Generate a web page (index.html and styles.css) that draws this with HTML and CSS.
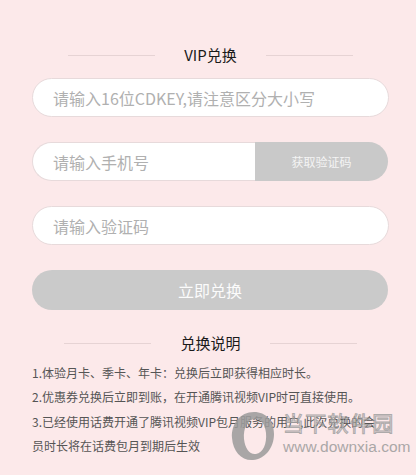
FILE: index.html
```html
<!DOCTYPE html>
<html lang="zh-CN">
<head>
<meta charset="utf-8">
<title>VIP兑换</title>
<link rel="stylesheet" href="styles.css">
</head>
<body>
<div class="page">
  <div class="heading first"><span class="rule"></span><span class="heading-text">VIP兑换</span><span class="rule"></span></div>

  <div class="field"><span class="ph">请输入16位CDKEY,请注意区分大小写</span></div>

  <div class="field-group">
    <div class="field left"><span class="ph">请输入手机号</span></div>
    <div class="code-btn">获取验证码</div>
  </div>

  <div class="field"><span class="ph">请输入验证码</span></div>

  <div class="submit">立即兑换</div>

  <div class="heading second"><span class="rule"></span><span class="heading-text">兑换说明</span><span class="rule"></span></div>

  <div class="notes">
    <p>1.体验月卡、季卡、年卡：兑换后立即获得相应时长。</p>
    <p>2.优惠券兑换后立即到账，在开通腾讯视频VIP时可直接使用。</p>
    <p>3.已经使用话费开通了腾讯视频VIP包月服务的用户,此次兑换的会员时长将在话费包月到期后生效</p>
  </div>
</div>

<div class="watermark">
  <svg class="wm-logo" width="46" height="52" viewBox="0 0 46 52">
    <path fill-rule="evenodd" fill="#9b9b9b" d="M24 2 C10 2 1 14 2 28 C3 42 12 51 23 50 C35 49 44 38 44 24 C44 11 36 2 24 2 Z M25 9 C18 9 13 18 14 29 C15 39 20 45 26 44 C33 43 37 34 36 23 C35 14 31 9 25 9 Z"/>
  </svg>
  <div class="wm-texts">
    <div class="wm-cn">当下软件园</div>
    <div class="wm-url">www.downxia.com</div>
  </div>
</div>
</body>
</html>
```

FILE: styles.css
```css
html, body {
  margin: 0;
  padding: 0;
}
body {
  background: #fce9ea;
  width: 416px;
  height: 475px;
  overflow: hidden;
  position: relative;
  font-family: "Noto Sans CJK SC", "Noto Sans", "Liberation Sans", sans-serif;
}
.page {
  margin-left: 32px;
  width: 357px;
  padding-top: 45px;
  display: flex;
  flex-direction: column;
}
.heading {
  display: flex;
  justify-content: center;
  align-items: center;
  gap: 29px;
  height: 20px;
}
.heading .rule {
  width: 87px;
  height: 1px;
  background: #e6d3d4;
}
.heading-text {
  font-size: 15px;
  line-height: 20px;
  color: #1a1a1a;
}
.heading.first {
  margin-bottom: 13px;
}
.heading.second {
  margin-top: 23px;
  margin-bottom: 8px;
}
.field {
  box-sizing: border-box;
  height: 39px;
  border: 1px solid #e7dadb;
  border-radius: 20px;
  background: #fff;
  display: flex;
  align-items: center;
  padding-left: 20px;
}
.ph {
  font-size: 16px;
  color: #b0b0b0;
  white-space: nowrap;
}
.field-group {
  display: flex;
  height: 39px;
  margin: 25px 0;
}
.field.left {
  flex: 1;
  border-right: none;
  border-radius: 20px 0 0 20px;
}
.code-btn {
  width: 133px;
  margin-right: 1px;
  height: 39px;
  background: #c9c9c9;
  border-radius: 0 20px 20px 0;
  color: #f4f4f4;
  font-size: 12px;
  display: flex;
  align-items: center;
  justify-content: center;
}
.submit {
  margin-top: 25px;
  margin-right: 1px;
  height: 40px;
  border-radius: 20px;
  background: #cacaca;
  color: #fbfbfb;
  font-size: 16px;
  display: flex;
  align-items: center;
  justify-content: center;
}
.notes {
  font-size: 12px;
  line-height: 24.3px;
  color: #555;
  padding-right: 6px;
}
.notes p {
  margin: 0;
}
.watermark {
  position: absolute;
  left: 230px;
  top: 408px;
  display: flex;
  align-items: flex-start;
  gap: 7px;
  opacity: 0.85;
  pointer-events: none;
}
.wm-logo {
  margin-top: 2px;
}
.wm-texts {
  display: flex;
  flex-direction: column;
  white-space: nowrap;
}
.wm-cn {
  font-size: 21px;
  line-height: 29px;
  color: rgba(160, 160, 160, 0.25);
  -webkit-text-stroke: 1px #a0a0a0;
  letter-spacing: 1.3px;
}
.wm-url {
  font-family: "Liberation Sans", sans-serif;
  font-size: 15.5px;
  line-height: 17px;
  color: #9c9c9c;
  margin-top: 1px;
}
```
